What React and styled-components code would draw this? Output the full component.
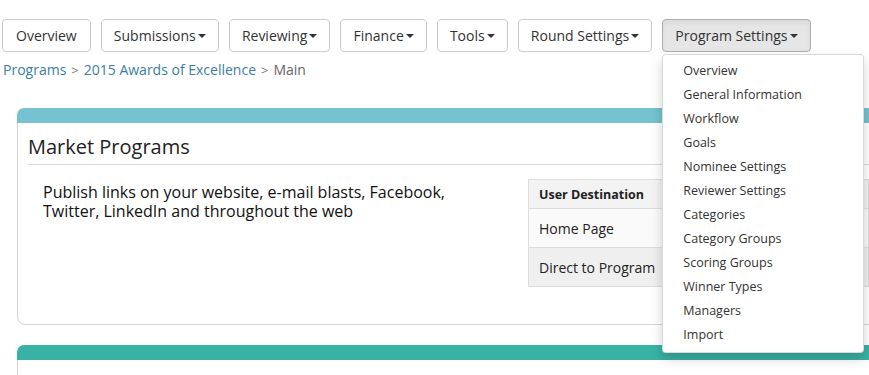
import React from "react";
import styled, { createGlobalStyle } from "styled-components";

const GlobalStyle = createGlobalStyle`
  html, body {
    margin: 0;
    padding: 0;
    overflow: hidden;
    background: #fff;
    font-family: "Open Sans", "Liberation Sans", sans-serif;
    color: #333;
  }
`;

const navItems = [
  { label: "Overview" },
  { label: "Submissions", caret: true },
  { label: "Reviewing", caret: true },
  { label: "Finance", caret: true },
  { label: "Tools", caret: true },
  { label: "Round Settings", caret: true },
  { label: "Program Settings", caret: true, open: true },
];

const menuItems = [
  "Overview",
  "General Information",
  "Workflow",
  "Goals",
  "Nominee Settings",
  "Reviewer Settings",
  "Categories",
  "Category Groups",
  "Scoring Groups",
  "Winner Types",
  "Managers",
  "Import",
];

export default function App() {
  return (
    <>
      <GlobalStyle />
      <Page>
        <NavBar>
          {navItems.map((item) => (
            <NavGroup key={item.label}>
              <NavButton $active={item.open} $wide={item.label === "Overview"}>
                {item.label}
                {item.caret && <Caret />}
              </NavButton>
              {item.open && (
                <Dropdown>
                  {menuItems.map((m) => (
                    <MenuItem key={m}>{m}</MenuItem>
                  ))}
                </Dropdown>
              )}
            </NavGroup>
          ))}
        </NavBar>

        <Breadcrumb>
          <Crumb>Programs</Crumb>
          <Sep>&gt;</Sep>
          <Crumb>2015 Awards of Excellence</Crumb>
          <Sep>&gt;</Sep>
          <Current>Main</Current>
        </Breadcrumb>

        <Panel>
          <PanelBar color="#76c2d0" />
          <PanelInner>
            <PanelTitle>Market Programs</PanelTitle>
            <PanelBody>
              <Intro>
                Publish links on your website, e-mail blasts, Facebook,
                Twitter, LinkedIn and throughout the web
              </Intro>
              <LinkTable>
                <thead>
                  <tr>
                    <Th>User Destination</Th>
                    <Th $link>Link</Th>
                  </tr>
                </thead>
                <tbody>
                  <Tr>
                    <Td>Home Page</Td>
                    <Td>Share</Td>
                  </Tr>
                  <Tr $shade>
                    <Td>Direct to Program</Td>
                    <Td>Share</Td>
                  </Tr>
                </tbody>
              </LinkTable>
            </PanelBody>
          </PanelInner>
        </Panel>

        <Panel $next>
          <PanelBar color="#38b2a4" />
          <PanelInner $empty />
        </Panel>
      </Page>
    </>
  );
}

const Page = styled.div`
  padding: 19px 0 0 2px;
  width: 1000px;
`;

const NavBar = styled.div`
  display: flex;
  gap: 10.15px;
`;

const NavGroup = styled.div`
  position: relative;
`;

const NavButton = styled.button`
  display: flex;
  align-items: center;
  height: 33px;
  padding: 0 ${(p) => (p.$wide ? "13px" : "12px")};
  border: 1px solid ${(p) => (p.$active ? "#adadad" : "#ccc")};
  border-radius: 4px;
  background: ${(p) => (p.$active ? "#e6e6e6" : "#fff")};
  box-shadow: ${(p) => (p.$active ? "inset 0 3px 5px rgba(0,0,0,.06)" : "none")};
  font-family: "Open Sans", "Liberation Sans", sans-serif;
  font-size: 14px;
  color: #333;
  white-space: nowrap;
`;

const Caret = styled.span`
  display: inline-block;
  width: 0;
  height: 0;
  margin-left: 2px;
  margin-top: 1px;
  border-top: 4px solid #333;
  border-left: 4px solid transparent;
  border-right: 4px solid transparent;
`;

const Dropdown = styled.ul`
  position: absolute;
  top: 35px;
  left: 0;
  z-index: 10;
  width: 200px;
  margin: 0;
  padding: 4px 0 5px;
  list-style: none;
  background: #fff;
  border: 1px solid rgba(0, 0, 0, 0.15);
  border-radius: 4px;
  box-shadow: 0 6px 12px rgba(0, 0, 0, 0.175);
`;

const MenuItem = styled.li`
  padding: 3px 20px;
  line-height: 18px;
  font-size: 12.5px;
  color: #333;
  white-space: nowrap;
`;

const Breadcrumb = styled.div`
  display: flex;
  align-items: center;
  gap: 5px;
  margin-top: 8px;
  padding-left: 1px;
  font-size: 14px;
  line-height: 20px;
`;

const Crumb = styled.span`
  color: #3a7ea6;
`;

const Sep = styled.span`
  color: #777;
  font-size: 13px;
`;

const Current = styled.span`
  color: #666;
`;

const Panel = styled.div`
  margin: ${(p) => (p.$next ? "20px" : "28px")} 0 0 15px;
  width: 900px;
`;

const PanelBar = styled.div`
  height: 15px;
  background: ${(p) => p.color};
  border-radius: 7px 7px 0 0;
`;

const PanelInner = styled.div`
  min-height: ${(p) => (p.$empty ? "60px" : "0")};
  padding: 0 10px 37px;
  border: 1px solid #d4d4d4;
  border-top: none;
  border-radius: 0 0 8px 8px;
`;

const PanelTitle = styled.h2`
  margin: 0;
  padding: 13px 0 6px;
  border-bottom: 1px solid #d8d8d8;
  font-size: 20px;
  font-weight: 400;
  line-height: 22px;
  color: #222;
`;

const PanelBody = styled.div`
  display: flex;
  align-items: flex-start;
  padding: 14px 0 0 15px;
`;

const Intro = styled.p`
  flex: none;
  width: 420px;
  margin: 4px 65px 0 0;
  font-size: 16px;
  line-height: 19px;
  color: #111;
`;

const LinkTable = styled.table`
  flex: none;
  border-collapse: collapse;
  border: 1px solid #ddd;
  font-size: 14px;
`;

const Th = styled.th`
  height: 28px;
  padding: 0 10px;
  text-align: left;
  font-size: 12.5px;
  font-weight: 700;
  color: ${(p) => (p.$link ? "#3a7ea6" : "#222")};
  background: #f3f3f3;
  border: 1px solid #ddd;
  white-space: nowrap;

  &:first-child {
    width: 185px;
  }
  &:last-child {
    padding-left: 95px;
  }
`;

const Tr = styled.tr`
  background: ${(p) => (p.$shade ? "#efefef" : "#fafafa")};
`;

const Td = styled.td`
  height: 38px;
  padding: 0 10px;
  color: #222;
  border: 1px solid #ddd;
  white-space: nowrap;

  &:last-child {
    padding-left: 85px;
  }
`;
